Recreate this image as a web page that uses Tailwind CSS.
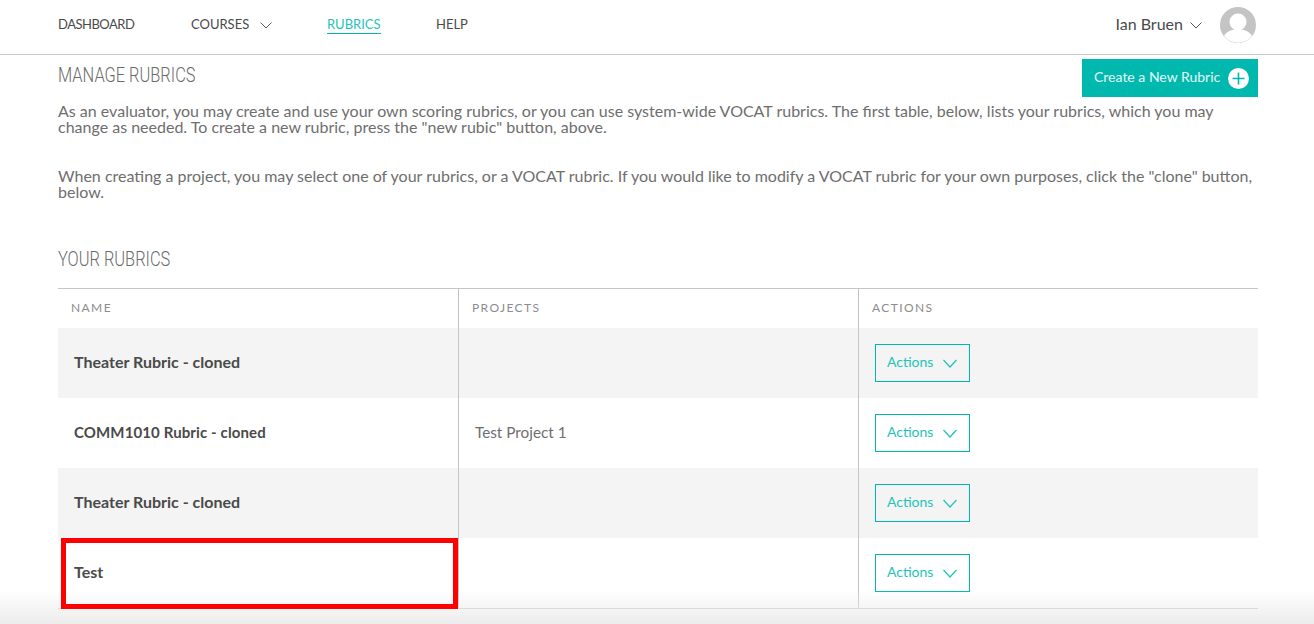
<!DOCTYPE html>
<html lang="en">
  <head>
    <meta charset="UTF-8" />
    <meta name="viewport" content="width=device-width, initial-scale=1.0" />
    <title>Manage Rubrics</title>
    <script src="https://cdn.jsdelivr.net/npm/@tailwindcss/browser@4"></script>
  </head>
  <body class="relative h-[624px] overflow-hidden bg-white font-['Lato','Open_Sans',sans-serif] text-[#4a4a4a]">
    <!-- top nav -->
    <header class="flex h-[55px] items-center justify-between border-b border-[#c8c8c8] pr-[58px] pb-[4px] pl-[58px]">
      <nav class="flex items-center text-[13px]">
        <a class="w-[133px] tracking-[-0.5px]">DASHBOARD</a>
        <a class="flex w-[136px] items-center">
          COURSES
          <svg class="ml-[11px]" width="12" height="7" viewBox="0 0 12 7" fill="none" stroke="#555" stroke-width="1"><path d="M.5.5 6 6 11.500.5" /></svg>
        </a>
        <a class="w-[109px]"><span class="border-b border-[#00b8ae] pb-px text-[#1fc4b8]">RUBRICS</span></a>
        <a>HELP</a>
      </nav>
      <div class="flex items-center">
        <span class="mb-[2px] text-[16px]">Ian Bruen</span>
        <svg class="mr-[18px] ml-[7px]" width="12" height="7" viewBox="0 0 12 7" fill="none" stroke="#555" stroke-width="1"><path d="M.5.5 6 6 11.500.5" /></svg>
        <svg width="36" height="36" viewBox="0 0 36 36">
          <circle cx="18" cy="18" r="18" fill="#c4c4c4" />
          <circle cx="18" cy="15" r="8.500" fill="#fff" />
          <path d="M4 29c3-5 9-7 14-7s11 2 14 7a18 18 0 0 1-28 0z" fill="#fff" />
        </svg>
      </div>
    </header>

    <main class="pr-[56px] pl-[58px]">
      <div class="flex items-start justify-between pt-[4px]">
        <h1 class="origin-left scale-x-[0.82] pt-[4px] font-['Roboto',sans-serif] text-[20px] leading-[24px] font-light text-[#6b6b6b]">MANAGE RUBRICS</h1>
        <button class="flex h-[38px] w-[176px] items-center bg-[#00b8ae] pl-[12px] text-[14px] text-white/90">
          <span class="mb-[4px]">Create a New Rubric</span>
          <svg class="mr-[9px] ml-auto" width="21" height="21" viewBox="0 0 21 21">
            <circle cx="10.500" cy="10.500" r="10.500" fill="#fff" />
            <path d="M10.500 4.500v12M4.500 10.500h12" stroke="#00b8ae" stroke-width="1.600" />
          </svg>
        </button>
      </div>
      <p class="mt-[6px] text-[16px] leading-[16px] text-[#6e6e6e]">As an evaluator, you may create and use your own scoring rubrics, or you can use system-wide VOCAT rubrics. The first table, below, lists your rubrics, which you may change as needed. To create a new rubric, press the "new rubic" button, above.</p>
      <p class="mt-[33px] text-[16px] leading-[16px] text-[#6e6e6e]">When creating a project, you may select one of your rubrics, or a VOCAT rubric. If you would like to modify a VOCAT rubric for your own purposes, click the "clone" button, below.</p>

      <h2 class="mt-[47px] origin-left scale-x-[0.82] font-['Roboto',sans-serif] text-[20px] leading-[24px] font-light text-[#6b6b6b]">YOUR RUBRICS</h2>

      <!-- rubrics table -->
      <div class="mt-[17px] border-y border-[#c4c4c4] text-[16px]">
        <div class="grid h-[39px] grid-cols-[400px_400px_400px] items-center text-[12px] tracking-[1.400px] text-[#8c8c8c]">
          <div class="flex h-full items-center pb-[2px] pl-[13px]">NAME</div>
          <div class="flex h-full items-center border-l border-[#c4c4c4] pb-[2px] pl-[13px]">PROJECTS</div>
          <div class="flex h-full items-center border-l border-[#c4c4c4] pb-[2px] pl-[13px]">ACTIONS</div>
        </div>

        <div class="grid h-[70px] grid-cols-[400px_400px_400px] bg-[#f4f4f4]">
          <div class="flex items-center pb-[2px] pl-[16px] font-bold">Theater Rubric - cloned</div>
          <div class="border-l border-[#c4c4c4]"></div>
          <div class="flex items-center border-l border-[#c4c4c4] pl-[16px]">
            <button class="flex h-[38px] w-[95px] items-center border border-[#00b8ae] pl-[11px] text-[14px] text-[#1fc4b8]">
              <span class="mb-[4px]">Actions</span>
              <svg class="ml-[10px]" width="14" height="9" viewBox="0 0 14 9" fill="none" stroke="#1fc4b8" stroke-width="1.200"><path d="M.5 1 7 8 13.500 1" /></svg>
            </button>
          </div>
        </div>

        <div class="grid h-[70px] grid-cols-[400px_400px_400px]">
          <div class="flex items-center pb-[2px] pl-[16px] text-[15px] font-bold tracking-[0.120px]">COMM1010 Rubric - cloned</div>
          <div class="flex items-center border-l border-[#c4c4c4] pb-[2px] pl-[16px] text-[15.300px] text-[#6e6e6e]">Test Project 1</div>
          <div class="flex items-center border-l border-[#c4c4c4] pl-[16px]">
            <button class="flex h-[38px] w-[95px] items-center border border-[#00b8ae] pl-[11px] text-[14px] text-[#1fc4b8]">
              <span class="mb-[4px]">Actions</span>
              <svg class="ml-[10px]" width="14" height="9" viewBox="0 0 14 9" fill="none" stroke="#1fc4b8" stroke-width="1.200"><path d="M.5 1 7 8 13.500 1" /></svg>
            </button>
          </div>
        </div>

        <div class="grid h-[70px] grid-cols-[400px_400px_400px] bg-[#f4f4f4]">
          <div class="flex items-center pb-[2px] pl-[16px] font-bold">Theater Rubric - cloned</div>
          <div class="border-l border-[#c4c4c4]"></div>
          <div class="flex items-center border-l border-[#c4c4c4] pl-[16px]">
            <button class="flex h-[38px] w-[95px] items-center border border-[#00b8ae] pl-[11px] text-[14px] text-[#1fc4b8]">
              <span class="mb-[4px]">Actions</span>
              <svg class="ml-[10px]" width="14" height="9" viewBox="0 0 14 9" fill="none" stroke="#1fc4b8" stroke-width="1.200"><path d="M.5 1 7 8 13.500 1" /></svg>
            </button>
          </div>
        </div>

        <div class="grid h-[70px] grid-cols-[400px_400px_400px]">
          <div class="relative flex items-center pb-[2px] pl-[16px] font-bold">
            Test
            <!-- red highlight drawn on the screenshot -->
            <div class="absolute top-0 right-0 left-[3px] z-10 h-[71px] border-[5px] border-[#ff0000]"></div>
          </div>
          <div class="border-l border-[#c4c4c4]"></div>
          <div class="flex items-center border-l border-[#c4c4c4] pl-[16px]">
            <button class="flex h-[38px] w-[95px] items-center border border-[#00b8ae] pl-[11px] text-[14px] text-[#1fc4b8]">
              <span class="mb-[4px]">Actions</span>
              <svg class="ml-[10px]" width="14" height="9" viewBox="0 0 14 9" fill="none" stroke="#1fc4b8" stroke-width="1.200"><path d="M.5 1 7 8 13.500 1" /></svg>
            </button>
          </div>
        </div>
      </div>
    </main>

    <!-- fade at the bottom of the window -->
    <div class="pointer-events-none absolute right-0 bottom-0 left-0 h-[34px] bg-gradient-to-b from-transparent to-[#ececec]"></div>
  </body>
</html>
